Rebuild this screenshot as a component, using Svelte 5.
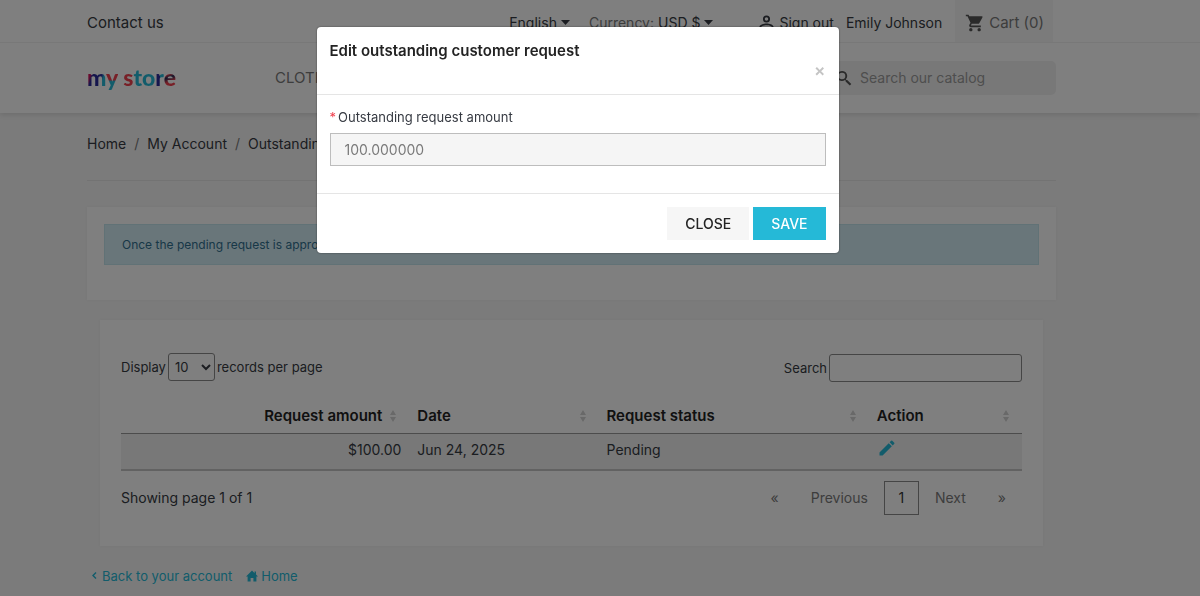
<script>
  let amount = "100.000000";
  let pageSize = "10";
  let search = "";

  const menu = ["Clothes", "Accessories", "Art"];
  const breadcrumb = ["Home", "My Account", "Outstanding request"];
  const columns = [
    { key: "amount", label: "Request amount" },
    { key: "date", label: "Date" },
    { key: "status", label: "Request status" },
    { key: "action", label: "Action" }
  ];
  const requests = [
    { amount: "$100.00", date: "Jun 24, 2025", status: "Pending" }
  ];
</script>

<style>
  :global(body) {
    background: #f6f6f6;
    color: #363a42;
    font-family: Inter, "Open Sans", sans-serif;
    font-size: 14px;
    line-height: 20px;
    overflow: hidden;
  }

  a {
    color: inherit;
    text-decoration: none;
  }

  button,
  input,
  select {
    box-sizing: border-box;
    color: inherit;
    font: inherit;
  }

  button {
    background: none;
    border: 0;
    cursor: pointer;
    padding: 0;
  }

  svg {
    fill: currentColor;
    flex: none;
  }

  .container {
    padding: 0 12% 0 87px;
  }

  /* header */

  .header {
    background: #fff;
    box-shadow: 0 2px 5px rgba(0, 0, 0, 0.11);
  }

  .top-nav {
    border-bottom: 1px solid #f1f1f1;
  }

  .top-nav .container {
    align-items: center;
    display: flex;
    height: 42px;
    justify-content: space-between;
  }

  .tools,
  .account {
    align-items: center;
    display: flex;
  }

  .tools {
    height: 100%;
    padding-right: 3px;
  }

  .contact,
  .account,
  .dropdown {
    padding-top: 3px;
  }

  .contact,
  .cart {
    font-size: 15px;
  }

  .dropdown {
    align-items: center;
    display: flex;
    gap: 4px;
    margin-right: 19px;
  }

  .account {
    gap: 12px;
    margin: 0 13px 0 26px;
  }

  .account a {
    align-items: center;
    display: flex;
    gap: 4px;
  }

  .muted,
  .cart,
  .menu {
    color: #7a7a7a;
  }

  .cart {
    align-items: center;
    background: #f6f6f6;
    box-sizing: border-box;
    display: flex;
    gap: 4px;
    height: 100%;
    padding: 3px 9px 0 10px;
  }

  .cart svg {
    color: #555;
  }

  .main-nav {
    align-items: center;
    display: flex;
    height: 70px;
  }

  .logo {
    flex: none;
    font-family: Lato, sans-serif;
    font-size: 23px;
    font-weight: 900;
    line-height: 28px;
    padding-bottom: 2px;
    width: 188px;
  }

  .logo span {
    background: #25b9d7;
    background-clip: text;
    color: transparent;
  }

  .logo .m {
    background-image: linear-gradient(110deg, #d4145a 25%, #2b2d9b 35%, #2b2d9b 65%, #25b9d7 75%);
  }

  .logo .y {
    background-image: linear-gradient(#f0414f 60%, #25b9d7 66%);
  }

  .logo .s {
    background-image: linear-gradient(#f0414f, #f0414f);
  }

  .logo .r {
    background-image: linear-gradient(90deg, #2b2d9b 50%, #25b9d7 60%);
  }

  .logo .e {
    background-image: linear-gradient(160deg, #f0414f 40%, #222a55 50%, #f0414f 65%);
  }

  .menu {
    display: flex;
    flex: 1;
    font-size: 15px;
    gap: 20px;
    text-transform: uppercase;
  }

  .search {
    align-items: center;
    background: #f1f1f1;
    border-radius: 5px;
    color: #7a7a7a;
    display: flex;
    gap: 8px;
    height: 34px;
    padding: 0 8px;
    width: 212px;
  }

  .search svg {
    color: #555;
  }

  .search input {
    background: none;
    border: 0;
    flex: 1;
    min-width: 0;
    padding: 0;
  }

  .search input::placeholder {
    color: #9c9c9c;
    opacity: 1;
  }

  /* content */

  .breadcrumb {
    border-bottom: 1px solid #e6e6e6;
    display: flex;
    list-style: none;
    margin: 0 0 26px;
    padding: 21px 0 26px;
  }

  .breadcrumb li + li::before {
    color: #7a7a7a;
    content: "/";
    margin: 0 8px;
  }

  .card {
    background: #fff;
    box-shadow: 0 0 3px rgba(0, 0, 0, 0.04);
  }

  .notice {
    padding: 17px 17px 35px;
  }

  .alert {
    background: #d3ecf5;
    border: 1px solid #c2e4ec;
    color: #31708f;
    font-size: 12px;
    margin: 0;
    padding: 10px 17px 9px;
  }

  .requests {
    margin: 20px 13px;
    padding: 31px 21px;
  }

  .filters,
  .summary {
    display: flex;
    justify-content: space-between;
  }

  .filters {
    font-size: 13px;
    margin-bottom: 16px;
  }

  .filters label {
    align-items: center;
    display: flex;
    gap: 2px;
  }

  .filters select,
  .filters input {
    background: #fff;
    border: 1px solid #8a8a8a;
    border-radius: 3px;
    height: 28px;
  }

  .filters select {
    padding: 0 0 0 2px;
    width: 47px;
  }

  .filters input {
    padding: 0 5px;
    width: 193px;
  }

  .filters .find {
    padding-top: 3px;
  }

  table {
    border-bottom: 2px solid #c4c4c4;
    border-collapse: collapse;
    table-layout: fixed;
    width: 100%;
  }

  th,
  td {
    box-sizing: border-box;
  }

  th {
    border-bottom: 1px solid #999;
    color: #232323;
    font-size: 15px;
    padding: 8px 12px 7px 8px;
    text-align: left;
  }

  th button {
    align-items: center;
    display: flex;
    font-weight: 600;
    gap: 7px;
    justify-content: space-between;
    width: 100%;
  }

  th svg {
    color: #d2d2d2;
  }

  th.amount {
    width: 32%;
  }

  th.amount button {
    justify-content: flex-end;
  }

  th.date {
    width: 21%;
  }

  th.action {
    width: 17%;
  }

  td {
    background: #f1f1f1;
    height: 36px;
    padding: 0 8px 2px;
  }

  td.amount {
    text-align: right;
  }

  td svg {
    color: #25b9d7;
    display: block;
  }

  .summary {
    align-items: center;
    padding-top: 10px;
  }

  .summary p {
    margin: 0;
  }

  .pages {
    color: #7a7a7a;
    display: flex;
  }

  .pages button {
    height: 34px;
    padding: 0 16px;
  }

  .pages .current {
    border: 1px solid #8a8a8a;
    color: #333;
    padding: 0;
    width: 35px;
  }

  .footer-links {
    color: #25b9d7;
    display: flex;
    font-size: 13px;
    gap: 14px;
    padding-left: 3px;
  }

  .footer-links a {
    align-items: center;
    display: flex;
    gap: 3px;
  }

  /* modal */

  .backdrop {
    background: rgba(0, 0, 0, 0.5);
    box-sizing: border-box;
    inset: 0;
    padding: 27px 45px 27px 0;
    position: fixed;
  }

  .modal {
    background: #fff;
    border-radius: 4px;
    box-shadow: 0 0 2px rgba(0, 0, 0, 0.5);
    margin: 0 auto;
    max-width: 522px;
  }

  .modal-header,
  .modal-body {
    border-bottom: 1px solid #e5e5e5;
    padding: 13px;
  }

  .modal-header {
    display: flex;
    flex-direction: column;
    padding: 14px 13px 15px;
  }

  .modal-header h4 {
    color: #232323;
    font-size: 15px;
    font-weight: 600;
    line-height: 20px;
    margin: 0;
  }

  .modal-header button {
    align-self: flex-end;
    color: #c4c4c4;
    font-size: 17px;
    font-weight: 600;
    line-height: 18px;
  }

  .modal-body {
    padding: 12px 13px 27px;
  }

  .modal-body label {
    display: flex;
    font-size: 13px;
    gap: 2px;
    margin-bottom: 6px;
  }

  .modal-body label span {
    color: #f0414f;
  }

  .modal-body input {
    background: #f5f5f5;
    border: 1px solid #bdbdbd;
    color: #7a7a7a;
    height: 33px;
    padding: 0 14px;
    width: 100%;
  }

  .modal-footer {
    display: flex;
    gap: 4px;
    justify-content: flex-end;
    padding: 13px;
  }

  .btn {
    background: #f6f6f6;
    color: #232323;
    font-weight: 500;
    height: 33px;
    padding: 0 18px;
    text-transform: uppercase;
  }

  .btn.primary {
    background: #25b9d7;
    color: #fff;
  }
</style>

<header class="header">
  <nav class="top-nav">
    <div class="container">
      <a class="contact" href="#contact">Contact us</a>
      <div class="tools">
        <button class="dropdown">
          English
          <svg width="9" height="5" viewBox="0 0 9 5"><path d="M0 0h9L4.500 5z" /></svg>
        </button>
        <button class="dropdown">
          <span class="muted">Currency:</span>
          USD $
          <svg width="9" height="5" viewBox="0 0 9 5"><path d="M0 0h9L4.500 5z" /></svg>
        </button>
        <div class="account">
          <a href="#logout">
            <svg width="17" height="17" viewBox="0 0 24 24">
              <path d="M12 2a5 5 0 1 0 0 10 5 5 0 0 0 0-10zm0 2.500a2.500 2.500 0 1 1 0 5 2.500 2.500 0 0 1 0-5zM12 13.500c-3.500 0-10 1.600-10 5V22h20v-3.500c0-3.400-6.500-5-10-5zm0 2.300c3 0 7.600 1.400 7.600 2.700v1.200H4.400v-1.200c0-1.300 4.600-2.700 7.600-2.700z" />
            </svg>
            Sign out
          </a>
          <a href="#account">Emily Johnson</a>
        </div>
        <a class="cart" href="#cart">
          <svg width="20" height="20" viewBox="0 0 24 24">
            <path d="M7 18c-1.100 0-2 .9-2 2s.9 2 2 2 2-.9 2-2-.9-2-2-2zM1 2v2h2l3.600 7.600-1.350 2.450C5.100 14.300 5 14.650 5 15c0 1.100.9 2 2 2h12v-2H7.400c-.1 0-.25-.1-.25-.25l.03-.12.900-1.630h7.450c.75 0 1.400-.4 1.750-1.030l3.600-6.500A1 1 0 0 0 20 4H5.200l-.94-2H1zm16 16c-1.100 0-2 .9-2 2s.9 2 2 2 2-.9 2-2-.9-2-2-2z" />
          </svg>
          Cart (0)
        </a>
      </div>
    </div>
  </nav>
  <div class="container main-nav">
    <a class="logo" href="#home"><span class="m">m</span><span class="y">y</span> <span class="s">s</span><span>t</span><span>o</span><span class="r">r</span><span class="e">e</span></a>
    <nav class="menu">
      {#each menu as item}
        <a href="#{item}">{item}</a>
      {/each}
    </nav>
    <div class="search">
      <svg width="16" height="16" viewBox="0 0 16 16">
        <path d="M6 1a5 5 0 1 0 3 9l.6.6v.8L13.800 15.500l1.500-1.500-4.100-4.100h-.8L9.900 9.300A5 5 0 0 0 6 1zm0 1.700a3.300 3.300 0 1 1 0 6.600 3.300 3.300 0 0 1 0-6.600z" />
      </svg>
      <input type="text" aria-label="Search our catalog" placeholder="Search our catalog" />
    </div>
  </div>
</header>

<main class="container">
  <ol class="breadcrumb">
    {#each breadcrumb as item}
      <li><a href="#{item}">{item}</a></li>
    {/each}
  </ol>

  <section class="card notice">
    <p class="alert">Once the pending request is approved, the amount is added</p>
  </section>

  <section class="card requests">
    <div class="filters">
      <label>
        Display
        <select bind:value={pageSize}>
          <option>10</option>
          <option>25</option>
          <option>50</option>
        </select>
        records per page
      </label>
      <label class="find">
        Search
        <input type="search" bind:value={search} />
      </label>
    </div>

    <table>
      <thead>
        <tr>
          {#each columns as column}
            <th class={column.key}>
              <button>
                {column.label}
                <svg width="8" height="12" viewBox="0 0 8 12"><path d="M4 0l3 5H1zM4 12l3-5H1z" /></svg>
              </button>
            </th>
          {/each}
        </tr>
      </thead>
      <tbody>
        {#each requests as request}
          <tr>
            <td class="amount">{request.amount}</td>
            <td>{request.date}</td>
            <td>{request.status}</td>
            <td>
              <button aria-label="Edit">
                <svg width="20" height="20" viewBox="0 0 24 24">
                  <path d="M3 17.250V21h3.750L17.810 9.940l-3.750-3.750L3 17.250zM20.710 7.040a1 1 0 0 0 0-1.410l-2.340-2.340a1 1 0 0 0-1.410 0l-1.830 1.830 3.750 3.750 1.830-1.830z" />
                </svg>
              </button>
            </td>
          </tr>
        {/each}
      </tbody>
    </table>

    <div class="summary">
      <p>Showing page 1 of 1</p>
      <div class="pages">
        <button aria-label="First">«</button>
        <button>Previous</button>
        <button class="current">1</button>
        <button>Next</button>
        <button aria-label="Last">»</button>
      </div>
    </div>
  </section>

  <div class="footer-links">
    <a href="#account">
      <svg width="9" height="12" viewBox="0 0 9 12"><path d="M5.500 2L2 5.500 5.500 9l1-1L4 5.500 6.500 3z" /></svg>
      Back to your account
    </a>
    <a href="#home">
      <svg width="12" height="12" viewBox="0 0 12 12"><path d="M6 0.500L0 6.500h1.600V11.500h3V8h2.800v3.500h3v-5H12l-2-2V1.500H8.500V3z" /></svg>
      Home
    </a>
  </div>
</main>

<div class="backdrop">
  <div class="modal" role="dialog" aria-labelledby="modal-title">
    <div class="modal-header">
      <h4 id="modal-title">Edit outstanding customer request</h4>
      <button aria-label="Close">×</button>
    </div>
    <div class="modal-body">
      <label for="amount"><span>*</span> Outstanding request amount</label>
      <input id="amount" type="text" bind:value={amount} />
    </div>
    <div class="modal-footer">
      <button class="btn">Close</button>
      <button class="btn primary">Save</button>
    </div>
  </div>
</div>
